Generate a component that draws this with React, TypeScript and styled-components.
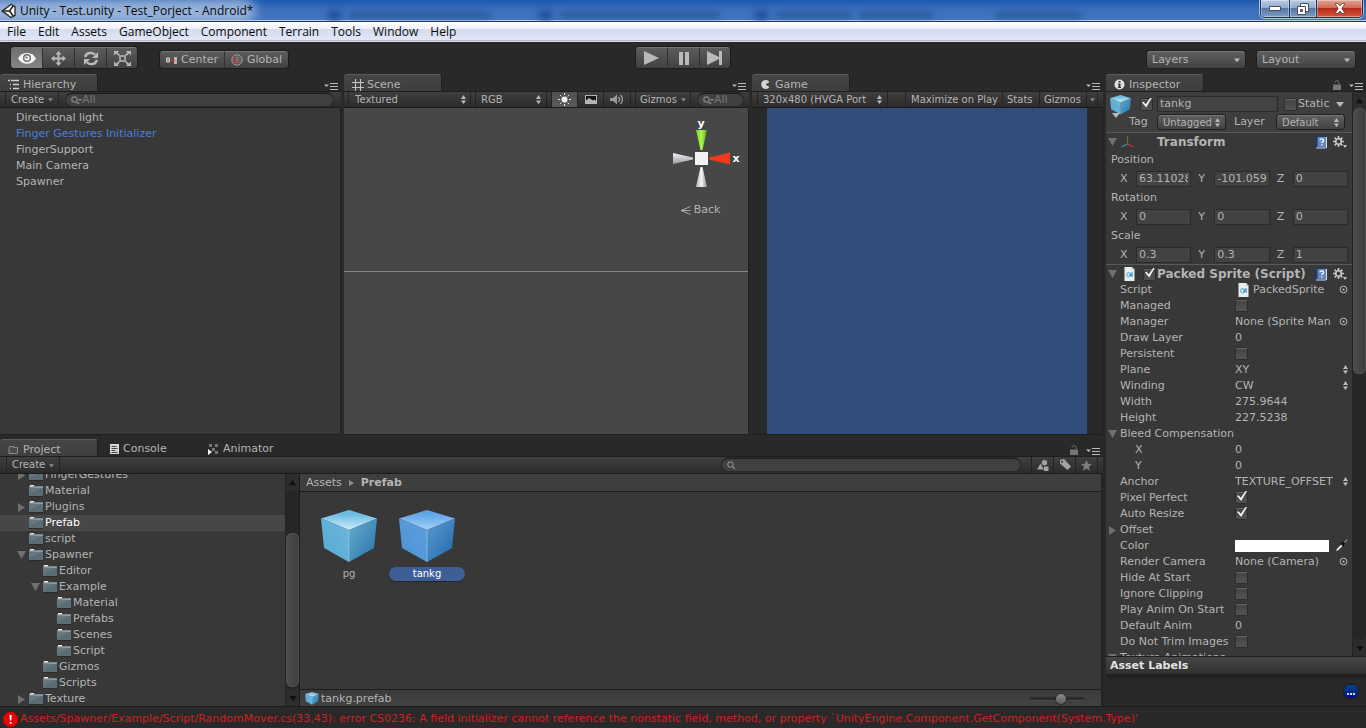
import React, { useId } from 'react';
import styled, { createGlobalStyle, css } from 'styled-components';

const c = {
  frame: '#292929',
  panel: '#383838',
  header: '#3e3e3e',
  line: '#1f1f1f',
  text: '#b4b4b4',
  dim: '#7c7c7c',
  icon: '#b9b9b9',
};

const Global = createGlobalStyle`
  * { box-sizing: border-box; }
  body {
    margin: 0;
    background: ${c.frame};
    color: ${c.text};
    font: 11px/16px "DejaVu Sans", Verdana, sans-serif;
    overflow: hidden;
  }
  button, input, select { font: inherit; color: inherit; background: none; border: 0; padding: 0; margin: 0; border-radius: 0; }
  select { appearance: none; }
  input { outline: none; min-width: 0; }
  svg { display: block; flex: none; }
  ul { list-style: none; margin: 0; padding: 0; }
  h2, h3 { margin: 0; font-size: 11px; }
`;

/* ---------- window frame ---------- */

const Shell = styled.div`
  display: flex;
  flex-direction: column;
  height: 100vh;
`;

const TitleBar = styled.header`
  position: relative;
  flex: none;
  display: flex;
  align-items: center;
  height: 22px;
  padding-left: 1px;
  overflow: hidden;
  background: linear-gradient(#1b58b0, #3b6fbd 45%, #4475bd);
  border-bottom: 1px solid #26365c;
  box-shadow: inset 0 -1px 0 #b5c9e8;
`;

const Glow = styled.div`
  position: absolute;
  left: -30px;
  top: -2px;
  width: 285px;
  height: 26px;
  border-radius: 12px;
  background: #b5c8e2;
  opacity: 0.75;
  filter: blur(6px);
`;

const Ghosts = styled.div`
  position: absolute;
  left: 24%;
  right: 12%;
  top: 10px;
  height: 10px;
  display: flex;
  align-items: center;
  gap: 8px;
  filter: blur(3px);
`;

const Ghost = styled.i<{ $w: number; $strong?: boolean }>`
  flex: ${(p) => p.$w} 1 0;
  height: ${(p) => (p.$strong ? 10 : 6)}px;
  background: ${(p) => (p.$strong ? '#24509a' : '#2a579b')};
`;

const GhostGap = styled.i<{ $w: number }>`
  flex: ${(p) => p.$w} 1 0;
`;

const Title = styled.h1`
  position: relative;
  margin: 0 auto 0 4px;
  font: 12px/20px "Open Sans", "Noto Sans", sans-serif;
  color: #0b0b0b;
`;

const AppLogo = styled.svg`
  position: relative;
`;

const WinButtons = styled.div`
  position: relative;
  align-self: flex-start;
  display: flex;
  height: 18px;
  margin-right: 3px;
  border: 1px solid #22345c;
  border-top: 0;
  border-radius: 0 0 5px 5px;
  overflow: hidden;
  box-shadow: 0 0 0 1px #a9bfe0;
`;

const WinButton = styled.button<{ $w: number; $close?: boolean }>`
  display: grid;
  place-items: center;
  width: ${(p) => p.$w}px;
  box-shadow: inset 0 0 0 1px rgba(255, 255, 255, 0.35);
  background: ${(p) =>
    p.$close
      ? 'linear-gradient(#e3a594, #cf6a55 45%, #b5281a 50%, #d8573a)'
      : 'linear-gradient(#b9cbe4, #93abcf 45%, #56779f 50%, #7c9cc8)'};
  & + & { border-left: 1px solid #22345c; }
`;

const MenuBar = styled.nav`
  flex: none;
  display: flex;
  height: 20px;
  padding-left: 7px;
  gap: 12px;
  background: linear-gradient(#fff, #eef1f9 34%, #d5dcef 36%, #e2e7f7 90%, #b0b6c8 92%, #f0f0f0);
  button {
    color: #0b0b0b;
    font: 12px/20px "Open Sans", "Noto Sans", sans-serif;
  }
`;

/* ---------- main toolbar ---------- */

const Toolbar = styled.div`
  flex: none;
  display: grid;
  grid-template-columns: 1fr auto 1fr;
  align-items: end;
  height: 32px;
  padding: 0 11px 6px;
`;

const Cluster = styled.div<{ $gap: number; $end?: boolean }>`
  display: flex;
  align-items: flex-end;
  gap: ${(p) => p.$gap}px;
  justify-content: ${(p) => (p.$end ? 'flex-end' : 'flex-start')};
`;

const ButtonGroup = styled.div`
  display: flex;
  border-radius: 3px;
  overflow: hidden;
  box-shadow: 0 0 0 1px #1d1d1d;
`;

const GroupButton = styled.button<{ $w: number; $h: number; $on?: boolean }>`
  display: flex;
  align-items: center;
  justify-content: center;
  gap: 4px;
  width: ${(p) => p.$w}px;
  height: ${(p) => p.$h}px;
  background: ${(p) => (p.$on ? 'linear-gradient(#6e6e6e, #858585)' : 'linear-gradient(#5c5c5c, #414141)')};
  border-top: 1px solid #757575;
  & + & { border-left: 1px solid #303030; }
`;

const bevel = css`
  background: linear-gradient(#5e5e5e, #424242);
  border-radius: 3px;
  border-top: 1px solid #787878;
  box-shadow: 0 0 0 1px #1f1f1f;
`;

const PopupBox = styled.span<{ $w: number; $h: number }>`
  ${bevel}
  display: flex;
  align-items: center;
  width: ${(p) => p.$w}px;
  height: ${(p) => p.$h}px;
  padding: 0 5px;
  select { flex: 1; min-width: 0; }
`;

/* ---------- docks ---------- */

const Work = styled.main`
  flex: 1;
  min-height: 0;
  display: grid;
  grid-template-columns: minmax(0, 1fr) 260px;
  gap: 3px;
`;

const LeftArea = styled.div`
  display: grid;
  min-height: 0;
  grid-template-rows: minmax(0, 361fr) minmax(0, 267fr);
  gap: 4px;
`;

const TopDocks = styled.div`
  display: grid;
  min-height: 0;
  grid-template-columns: minmax(0, 341fr) minmax(0, 405fr) minmax(0, 351fr);
  gap: 3px;
`;

const Dock = styled.section`
  display: flex;
  flex-direction: column;
  min-width: 0;
  min-height: 0;
`;

const TabStrip = styled.div`
  flex: none;
  display: flex;
  height: 17px;
  padding-right: 3px;
`;

const Tab = styled.button<{ $on?: boolean }>`
  display: flex;
  align-items: center;
  gap: 3px;
  width: 98px;
  padding: 3px 0 0 ${(p) => (p.$on ? 8 : 12)}px;
  text-align: left;
  ${(p) =>
    p.$on &&
    css`
      background: linear-gradient(#454545, #3e3e3e);
      border-top: 1px solid #5b5b5b;
      border-right: 1px solid #1f1f1f;
      border-radius: 3px 3px 0 0;
    `}
`;

const TabEnd = styled.div`
  display: flex;
  align-items: flex-end;
  gap: 8px;
  margin-left: auto;
  padding-bottom: 1px;
`;

const IconButton = styled.button`
  display: flex;
  align-items: center;
  justify-content: center;
`;

const SubBar = styled.div<{ $tall?: boolean }>`
  flex: none;
  display: flex;
  align-items: stretch;
  height: ${(p) => (p.$tall ? 18 : 17)}px;
  font-size: 10px;
  line-height: 16px;
  background: linear-gradient(#3f3f3f, #2b2b2b);
  border-top: 1px solid #1f1f1f;
  border-bottom: 1px solid #1c1c1c;
`;

const Cell = styled.div<{ $w?: number; $lead?: number; $on?: boolean; $pad?: number }>`
  display: flex;
  align-items: center;
  justify-content: space-between;
  flex: none;
  width: ${(p) => (p.$w ? p.$w + 'px' : 'auto')};
  margin-left: ${(p) => p.$lead ?? 0}px;
  padding: 0 ${(p) => p.$pad ?? 4}px 0 ${(p) => p.$pad ?? 6}px;
  border-left: 1px solid #232323;
  box-shadow: 1px 0 0 #232323;
  background: ${(p) => (p.$on ? 'linear-gradient(#505050, #5a5a5a)' : 'none')};
  white-space: nowrap;
  select { flex: 1; min-width: 0; overflow: hidden; }
  button { flex: 1; display: flex; align-items: center; justify-content: space-between; }
`;

const CenterCell = styled(Cell)`
  button { justify-content: center; }
`;

const BarEnd = styled.span`
  width: 6px;
  border-left: 1px solid #232323;
`;

const Search = styled.label<{ $lead: number; $trail: number; $grow?: boolean; $w?: number }>`
  display: flex;
  align-items: center;
  flex: ${(p) => (p.$grow ? '1 1 0' : `0 1 ${p.$w}px`)};
  min-width: 0;
  height: 13px;
  margin: 1px ${(p) => p.$trail}px 1px ${(p) => p.$lead}px;
  padding: 0 5px;
  border-radius: 7px;
  background: #404040;
  border-top: 1px solid #1f1f1f;
  box-shadow: 0 0 0 1px #2a2a2a;
  font-size: 11px;
  line-height: 12px;
  input { flex: 1; width: 20px; height: 12px; line-height: 12px; }
  input::placeholder { color: #777; opacity: 1; }
`;

const Body = styled.div`
  flex: 1;
  min-height: 0;
  background: ${c.panel};
  border-right: 1px solid #1f1f1f;
  border-bottom: 1px solid #1f1f1f;
  overflow: hidden;
`;

const HierarchyList = styled.ul`
  padding-top: 2px;
  li { padding-left: 16px; height: 16px; }
`;

const HierarchyItem = styled.button<{ $prefab?: boolean }>`
  color: ${(p) => (p.$prefab ? '#4c7ed9' : c.text)};
  line-height: 16px;
`;

const SceneView = styled(Body)`
  position: relative;
  background: linear-gradient(#474747 0 163px, #878787 163px 164px, #474747 164px);
`;

const SceneGizmo = styled.div`
  position: absolute;
  top: 8px;
  right: 6px;
  display: flex;
  flex-direction: column;
  align-items: center;
  width: 80px;
`;

const BackButton = styled.button`
  display: flex;
  align-items: center;
  gap: 3px;
  margin-top: 12px;
  padding-right: 4px;
`;

const GameView = styled(Body)`
  display: flex;
  justify-content: center;
  background: #292929;
`;

const GameScreen = styled.div`
  width: 320px;
  max-width: 100%;
  background: #314d79;
`;

/* ---------- project ---------- */

const ProjectBody = styled.div`
  flex: 1;
  min-height: 0;
  display: grid;
  grid-template-columns: minmax(0, 299fr) minmax(0, 804fr);
`;

const TreePane = styled.div`
  display: flex;
  min-height: 0;
  background: ${c.panel};
`;

const TreeClip = styled.div`
  flex: 1;
  min-width: 0;
  overflow: hidden;
`;

const Tree = styled.ul`
  margin-top: -7px;
`;

const TreeRow = styled.li<{ $depth: number; $on?: boolean }>`
  display: flex;
  align-items: center;
  height: 16px;
  padding-left: ${(p) => 17 + p.$depth * 14}px;
  background: ${(p) => (p.$on ? '#474747' : 'none')};
  color: ${(p) => (p.$on ? '#fff' : c.text)};
`;

const FoldSlot = styled.span`
  flex: none;
  width: 12px;
`;

const TreeButton = styled.button`
  display: flex;
  align-items: center;
  gap: 2px;
  line-height: 16px;
`;

const ScrollBar = styled.div`
  flex: none;
  display: flex;
  flex-direction: column;
  align-items: center;
  width: 14px;
  background: #2d2d2d;
  border-left: 1px solid #232323;
`;

const ScrollArrow = styled.button`
  display: grid;
  place-items: center;
  flex: none;
  width: 12px;
  height: 16px;
`;

const ScrollTrack = styled.div`
  flex: 1;
  display: flex;
  flex-direction: column;
  width: 13px;
  border-radius: 6px;
  background: #262626;
`;

const ScrollPart = styled.div<{ $grow: number; $thumb?: boolean }>`
  flex: ${(p) => p.$grow} 1 0;
  border-radius: 6px;
  ${(p) =>
    p.$thumb &&
    css`
      background: linear-gradient(90deg, #4e4e4e, #3c3c3c);
      box-shadow: inset 0 0 0 1px #505050;
    `}
`;

const AssetPane = styled.div`
  display: flex;
  flex-direction: column;
  min-width: 0;
  border-left: 1px solid #1c1c1c;
  border-right: 2px solid #222;
  background: ${c.panel};
`;

const Crumbs = styled.div`
  flex: none;
  display: flex;
  align-items: center;
  gap: 7px;
  height: 18px;
  padding-left: 6px;
  background: ${c.header};
  border-bottom: 1px solid #1c1c1c;
`;

const Bold = styled.span`
  font-weight: bold;
`;

const AssetGrid = styled.ul`
  flex: 1;
  min-height: 0;
  display: flex;
  align-items: flex-start;
  gap: 2px;
  padding: 18px 0 0 11px;
`;

const Asset = styled.button`
  display: flex;
  flex-direction: column;
  align-items: center;
  gap: 4px;
  width: 76px;
`;

const AssetName = styled.span<{ $on?: boolean }>`
  width: 100%;
  height: 14px;
  border-radius: 7px;
  font-size: 10px;
  line-height: 14px;
  text-align: center;
  ${(p) =>
    p.$on &&
    css`
      background: #3e5f96;
      color: #fff;
      box-shadow: 0 1px 1px #242424;
    `}
`;

const AssetFooter = styled.div`
  flex: none;
  display: flex;
  align-items: center;
  gap: 2px;
  height: 17px;
  padding: 1px 17px 0 5px;
  background: linear-gradient(#3a3a3a, #424242);
  border-top: 1px solid #1c1c1c;
`;

const ZoomSlider = styled.input`
  appearance: none;
  width: 55px;
  height: 10px;
  margin-left: auto;
  &::-webkit-slider-runnable-track {
    height: 4px;
    border-radius: 2px;
    background: #2b2b2b;
    border-bottom: 1px solid #4a4a4a;
  }
  &::-webkit-slider-thumb {
    appearance: none;
    width: 10px;
    height: 10px;
    margin-top: -3px;
    border-radius: 50%;
    background: linear-gradient(#8a8a8a, #5b5b5b);
    box-shadow: 0 0 0 1px #2a2a2a;
  }
`;

/* ---------- inspector ---------- */

const InspectorMain = styled.div`
  flex: 1;
  min-height: 0;
  display: flex;
  border-top: 1px solid #1f1f1f;
`;

const InspectorScroll = styled.div`
  flex: 1;
  min-width: 0;
  overflow: hidden;
  background: ${c.panel};
`;

const ObjectHeader = styled.div`
  display: flex;
  height: 41px;
  padding: 3px 8px 0 4px;
  background: ${c.header};
  border-bottom: 1px solid #5a5a5a;
`;

const ObjectRows = styled.div`
  flex: 1;
  min-width: 0;
`;

const ObjectCube = styled.span`
  position: relative;
  flex: none;
  width: 18px;
  svg + svg {
    position: absolute;
    left: 2px;
    top: 16px;
  }
`;

const ObjectRow = styled.div<{ $pad: number }>`
  display: flex;
  align-items: center;
  height: 18px;
  padding-left: ${(p) => p.$pad}px;
`;

const Push = styled.span`
  margin-left: auto;
`;

const NameField = styled.input`
  flex: 1;
  height: 16px;
  margin: 0 6px 0 4px;
  padding: 0 2px;
  background: #424242;
  border: 1px solid #2b2b2b;
`;

const Check = styled.input`
  appearance: none;
  position: relative;
  flex: none;
  width: 13px;
  height: 13px;
  border-radius: 2px;
  background: linear-gradient(#424242, #545454);
  box-shadow: inset 0 0 0 1px #2c2c2c, inset 0 2px 0 #666;
  &:checked::after {
    content: '';
    position: absolute;
    left: 2px;
    top: 0;
    width: 10px;
    height: 10px;
    background: #f2f2f2;
    clip-path: polygon(0 50%, 15% 42%, 38% 68%, 85% 0, 100% 0, 42% 100%);
  }
`;

const TagLabel = styled.label<{ $w: number }>`
  width: ${(p) => p.$w}px;
  padding-left: 1px;
`;

const SmallPopup = styled(PopupBox)`
  font-size: 10px;
`;

const CompHeader = styled.div`
  display: flex;
  align-items: center;
  height: 17px;
  padding: 1px 5px 0 2px;
`;

const CompSection = styled.section`
  & + & { border-top: 1px solid #5a5a5a; }
`;

const CompIcon = styled.span<{ $w: number }>`
  display: flex;
  align-items: center;
  gap: 4px;
  width: ${(p) => p.$w}px;
`;

const CompTitle = styled.h3`
  flex: 1;
  font-size: 12px;
  line-height: 16px;
  white-space: nowrap;
`;

const CompTools = styled.span`
  display: flex;
  gap: 6px;
`;

const VecLabel = styled.div`
  height: 19px;
  padding-left: 5px;
  line-height: 19px;
`;

const VecRow = styled.div`
  display: flex;
  gap: 7px;
  height: 19px;
  padding: 2px 4px 0 14px;
`;

const VecCell = styled.label`
  flex: 1;
  min-width: 0;
  display: flex;
  align-items: flex-start;
  span { width: 16px; }
  input {
    flex: 1;
    width: 0;
    height: 16px;
    padding: 0 2px;
    background: #424242;
    border: 1px solid #2b2b2b;
  }
`;

const PropLine = styled.div`
  display: grid;
  grid-template-columns: 14px 113px 2px minmax(0, 1fr);
  align-items: center;
  height: 16px;
`;

const PropLabel = styled.label<{ $indent?: boolean; $free?: boolean }>`
  grid-column: 2;
  padding-left: ${(p) => (p.$indent ? 15 : 0)}px;
  overflow: ${(p) => (p.$free ? 'visible' : 'hidden')};
  white-space: nowrap;
`;

const Gutter = styled.span`
  grid-column: 1;
  padding-left: 2px;
`;

const PropValue = styled.div`
  grid-column: 4;
  display: flex;
  align-items: center;
  height: 16px;
  min-width: 0;
  padding: 0 4px 1px 0;
  select, input[type='text'] { flex: 1; min-width: 0; height: 15px; }
`;

const ObjectText = styled.span`
  flex: 1;
  min-width: 0;
  overflow: hidden;
  white-space: nowrap;
  margin-right: 4px;
`;

const ObjectIcon = styled.span`
  padding: 0 4px 0 3px;
`;

const Swatch = styled.button`
  flex: 1;
  height: 12px;
  background: #fff;
  margin-right: 6px;
`;

const LabelsHeader = styled.h2`
  flex: none;
  height: 18px;
  padding-left: 4px;
  line-height: 17px;
  color: #e2e2e2;
  background: linear-gradient(#474747, #303030);
  border-top: 1px solid #1f1f1f;
`;

const LabelsBody = styled.div`
  flex: none;
  display: flex;
  align-items: center;
  justify-content: flex-end;
  height: 32px;
  padding: 2px 8px 0 0;
  background: linear-gradient(#1f1f1f, #292929 8px);
`;

const DotsButton = styled.button`
  display: flex;
  align-items: flex-end;
  justify-content: center;
  gap: 1px;
  width: 14px;
  height: 13px;
  padding-bottom: 3px;
  border-radius: 5px;
  background: linear-gradient(#02468c, #000e7c);
  box-shadow: 0 0 2px #000;
  i { width: 2px; height: 2px; background: #d6def0; }
`;

const StatusBar = styled.footer`
  flex: none;
  display: flex;
  align-items: center;
  gap: 2px;
  height: 22px;
  padding: 3px 0 0 3px;
  border-top: 1px solid #1c1c1c;
  color: #cc2222;
  white-space: nowrap;
  overflow: hidden;
`;

/* ---------- icons ---------- */

const TriDown = ({ s = 6, fill = c.icon }: { s?: number; fill?: string }) => (
  <svg width={s} height={s} viewBox="0 0 8 8"><path d="M0 2h8L4 7z" fill={fill} /></svg>
);
const TriUp = () => (
  <svg width="7" height="7" viewBox="0 0 8 8"><path d="M0 7h8L4 1z" fill="#111" /></svg>
);
const UpDown = () => (
  <svg width="5" height="9" viewBox="0 0 5 9" fill={c.icon}><path d="M0 4h5L2.500 0zM0 5.500h5L2.500 9z" /></svg>
);
const FoldOpen = () => (
  <svg width="9" height="8" viewBox="0 0 9 8"><path d="M0 0h9L4.500 8z" fill="#707070" /></svg>
);
const FoldShut = () => (
  <svg width="8" height="9" viewBox="0 0 8 9"><path d="M1 0v9l7-4.500z" fill="#707070" /></svg>
);
const PaneMenu = () => (
  <svg width="14" height="7" viewBox="0 0 14 7"><path d="M0 1.500h5L2.500 4z" fill={c.icon} /><path d="M5 .5h8M5 3.500h8M5 6.500h8" transform="translate(1)" stroke={c.icon} /></svg>
);
const Lock = () => (
  <svg width="8" height="10" viewBox="0 0 8 10"><path d="M0 4.500h8V10H0z" fill="#777" /><path d="M2 2.500C2 .2 6 .2 6 2.500v2" fill="none" stroke="#777" /></svg>
);
const Magnifier = ({ arrow }: { arrow?: boolean }) => (
  <svg width={arrow ? 11 : 9} height="9" viewBox={arrow ? '0 0 11 9' : '0 0 9 9'}>
    <circle cx="3.500" cy="3.500" r="2.700" fill="none" stroke="#868686" strokeWidth="1.200" />
    <path d="M5.500 5.500L8 8" stroke="#868686" strokeWidth="1.500" />
    {arrow && <path d="M7 3h4L9 5.500z" fill="#868686" />}
  </svg>
);
const Logo = () => (
  <AppLogo width="15" height="16" viewBox="0 0 15 16">
    <path d="M1 8L10 1.500 14 3.500V12.500L10 14.500z" fill="#fff" stroke="#222" strokeWidth="1.300" strokeLinejoin="round" />
    <path d="M2 8h6.500M8.500 8L12.500 2.500M8.500 8l4 5.500" stroke="#222" strokeWidth="1.600" />
    <path d="M4 6.500l4-3M4 9.500l4 3" stroke="#555" strokeWidth="1" />
  </AppLogo>
);
const Eye = () => (
  <svg width="18" height="13" viewBox="0 0 18 13"><path d="M0 6.500C4-.8 14-.8 18 6.500 14 13.500 4 13.500 0 6.500z" fill="#f4f4f4" /><circle cx="9" cy="6" r="4" fill="#6b6b6b" /><circle cx="9" cy="6" r="2.600" fill="#f4f4f4" /><circle cx="8.500" cy="5.500" r="1.100" fill="#666" /></svg>
);
const Move = () => (
  <svg width="15" height="15" viewBox="0 0 15 15"><path d="M7.500 2v11M2 7.500h11" stroke={c.icon} strokeWidth="2" /><path d="M7.500 0L10.500 3.500h-6zM7.500 15l3-3.500h-6zM0 7.500l3.500-3v6zM15 7.500l-3.500-3v6z" fill={c.icon} /></svg>
);
const Rotate = () => (
  <svg width="16" height="15" viewBox="0 0 16 15"><path d="M2 6C3.500 1.500 9 .5 12 3.800M14 9C12.500 13.500 7 14.500 4 11.200" fill="none" stroke={c.icon} strokeWidth="2.400" /><path d="M15 1v6H9zM1 14V8h6z" fill={c.icon} /></svg>
);
const Scale = () => (
  <svg width="17" height="15" viewBox="0 0 17 15" fill={c.icon}><path d="M0 0h5L3.600 1.400 6 4 5 5 2 2.600 0 4.500zM17 0v4.500l-2-1.900L12 5l-1-1 2.400-2.600L12 0zM0 15v-4.500l2 1.900L5 10l1 1-2.400 2.600L5 15zM17 15h-5l1.400-1.400L11 11l1-1 3 2.400 2-1.900z" /><path d="M6 5h5v5H6z" fill="none" stroke={c.icon} strokeWidth="1.500" /></svg>
);
const Pivot = () => (
  <svg width="11" height="7" viewBox="0 0 11 7"><path d="M.5 1h3v4h-3z" fill="#999" stroke="#c8c8c8" /><path d="M5 3.500h3" stroke="#c23" strokeWidth="1.400" /><path d="M8 0h3v7H8z" fill="#b4b4b4" /><path d="M6 1.500l3 2-3 2z" fill="#b33" /></svg>
);
const Globe = () => (
  <svg width="12" height="12" viewBox="0 0 12 12"><circle cx="6" cy="6" r="5.200" fill="#555" stroke="#9c9c9c" /><path d="M6 1v10M1 6h10M2.500 3c2 1.500 5 1.500 7 0M2.500 9c2-1.500 5-1.500 7 0" stroke="#8b8b8b" strokeWidth=".7" fill="none" /><path d="M3.500 2.500v6H8" fill="none" stroke="#c2303a" strokeWidth="1.500" /></svg>
);
const PlayIcon = () => <svg width="15" height="14" viewBox="0 0 15 14"><path d="M0 0l15 7-15 7z" fill={c.icon} /></svg>;
const PauseIcon = () => <svg width="10" height="13" viewBox="0 0 10 13"><path d="M0 0h4v13H0zM6 0h4v13H6z" fill={c.icon} /></svg>;
const StepIcon = () => <svg width="16" height="14" viewBox="0 0 16 14"><path d="M0 0l12 6V0h3v14h-3V8L0 14z" fill={c.icon} /></svg>;
const ListIcon = () => <svg width="12" height="11" viewBox="0 0 12 11"><path d="M0 1.500h2M3 1.500h8M2 5.500h1M5 5.500h6M2 9.500h1M5 9.500h6" stroke="#d0d0d0" strokeWidth="1.300" /></svg>;
const HashIcon = () => <svg width="12" height="12" viewBox="0 0 12 12"><path d="M3.500 0v12M8.500 0v12M0 3.500h12M0 8.500h12" stroke="#c4c4c4" strokeWidth="1.100" /></svg>;
const GameIcon = () => <svg width="12" height="11" viewBox="0 0 12 11"><path d="M5.500 1A4.500 4.500 0 1 0 9.500 8L5.500 5.500 9.500 3A4.500 4.500 0 0 0 5.500 1z" fill="#d6d6d6" /></svg>;
const InfoIcon = () => <svg width="12" height="12" viewBox="0 0 12 12"><circle cx="5.500" cy="5.500" r="5" fill="#e0e0e0" /><path d="M4.500 2h2v1.500h-2zM4 4.500h2.500v3.500H7V9H4V8h.5V5.500H4z" fill="#333" /></svg>;
const ProjectIcon = () => <svg width="12" height="10" viewBox="0 0 12 10"><path d="M1 8.500v-6h.5v-1h4v1H9.500v6z" fill="#4a4a4a" stroke="#8d8d8d" /></svg>;
const ConsoleIcon = () => <svg width="10" height="10" viewBox="0 0 10 10"><path d="M0 0h9v10H0z" fill="#d8d8d8" /><path d="M1.500 2.500h5M1.500 4.500h6M1.500 6.500h4M1.500 8.500h6" stroke="#444" /></svg>;
const AnimatorIcon = () => <svg width="12" height="11" viewBox="0 0 12 11"><path d="M1 0h3v3H1zM7 0h3v3H7zM4 4h3v3H4zM7 7h3v3H7z" fill="#747474" /><path d="M0 5l4 3-4 3z" fill="#fff" /></svg>;
const Sun = () => (
  <svg width="13" height="13" viewBox="0 0 13 13"><circle cx="6.500" cy="6.500" r="3" fill="#f0f0f0" /><path d="M6.500 0v2M6.500 11v2M0 6.500h2M11 6.500h2M2 2l1.300 1.300M9.700 9.700L11 11M11 2L9.700 3.300M2 11l1.300-1.300" stroke="#e4e4e4" /></svg>
);
const Picture = () => <svg width="12" height="9" viewBox="0 0 12 9"><path d="M0 0h12v9H0z" fill="#b4b4b4" /><path d="M1 1h10v5L9.500 4.500 8 5.500 4 3 1 5.500z" fill="#161616" /></svg>;
const Speaker = () => <svg width="14" height="11" viewBox="0 0 14 11"><path d="M0 4h3l4-3.500v10L3 7H0z" fill="#999" /><path d="M8.500 3c1.300 1.500 1.300 3.500 0 5M10.500 1c2.500 2.500 2.500 6.500 0 9" fill="none" stroke="#a8a8a8" strokeWidth="1.200" /></svg>;
const Shapes = () => <svg width="12" height="11" viewBox="0 0 12 11" fill="#a2a2a2"><circle cx="7.500" cy="2.700" r="2.700" /><path d="M3.500 3.500L7 9.500H0zM7 6.500h4.500V11H7z" /></svg>;
const TagIcon = () => <svg width="12" height="12" viewBox="0 0 12 12"><path d="M1 1l4-1 7 7.500L8.500 11 1 4.500z" fill="#a2a2a2" /><circle cx="3" cy="2.800" r="1" fill="#333" /></svg>;
const Star = () => <svg width="11" height="11" viewBox="0 0 11 11"><path d="M5.500 0l1.600 3.800 3.900.3-3 2.600 1 4-3.500-2.200L2 10.700l1-4L0 4.100l3.900-.3z" fill="#7c7c7c" /></svg>;
const Folder = () => (
  <svg width="14" height="12" viewBox="0 0 14 12"><path d="M0 2L1 0h4l1 1.500h8V11H0z" fill="#7b8a92" /><path d="M0 3h14v8H0z" fill="#5b6c75" /><path d="M0 9V3h14z" fill="#66777f" /><path d="M1 .8h4" stroke="#e4e9eb" strokeWidth="1.500" /><path d="M6 2h8" stroke="#a3aeb4" /><path d="M0 11.500h14" stroke="#2b2b2b" /></svg>
);
const Cube = ({ w, blue }: { w: number; blue?: boolean }) => {
  const id = useId();
  const [t1, t2, l1, l2, r1, r2] = blue
    ? ['#5fa6e6', '#a5d0fa', '#4a93d4', '#5e9fdc', '#5596cc', '#276cb1']
    : ['#6dbbe3', '#cdeefc', '#55a9d3', '#6db7dd', '#63a7c9', '#2a79b0'];
  return (
    <svg width={w} height={Math.round((w * 53) / 56)} viewBox="0 0 56 53">
      <defs>
        <linearGradient id={id + 't'} x1="0" y1="0" x2="0" y2="1"><stop offset=".2" stopColor={t1} /><stop offset="1" stopColor={t2} /></linearGradient>
        <linearGradient id={id + 'l'} x1="0" y1="1" x2="1" y2="0"><stop offset="0" stopColor={l1} /><stop offset="1" stopColor={l2} /></linearGradient>
        <linearGradient id={id + 'r'} x1="0" y1="0" x2="1" y2="1"><stop offset=".1" stopColor={r1} /><stop offset=".9" stopColor={r2} /></linearGradient>
      </defs>
      <path d="M0 8.500L28 0l28 8.500L28 20z" fill={`url(#${id}t)`} />
      <path d="M0 8.500L28 20v32L3 38z" fill={`url(#${id}l)`} />
      <path d="M56 8.500L28 20v32l25-14z" fill={`url(#${id}r)`} />
      <path d="M28 20v32" stroke="#9fd0ee" strokeWidth=".8" opacity=".7" />
    </svg>
  );
};
const Axes = () => (
  <svg width="14" height="12" viewBox="0 0 14 12"><path d="M6.500 8V0" stroke="#4f7a24" strokeWidth="1.300" /><path d="M6.500 8L12.500 11" stroke="#c33" strokeWidth="1.300" /><path d="M6.500 8L.5 11" stroke="#3a8fb5" strokeWidth="1.300" /></svg>
);
const ScriptIcon = () => (
  <svg width="11" height="14" viewBox="0 0 11 14"><path d="M.5 0H8l2.500 2.500V14H.5z" fill="#e8edf0" /><path d="M8 0v2.500h2.500z" fill="#a9b4ba" /><path d="M5 5.500c-3-.6-3 5-.2 4.400M6 5.500v4.500M8 5v4.500M5 7h4M5 8.700h4" fill="none" stroke="#3f97c9" strokeWidth="1" /></svg>
);
const HelpBook = () => (
  <svg width="12" height="13" viewBox="0 0 12 13"><path d="M0 1l2-1h10v12l-1 1H1L0 12z" fill="#1f3a66" /><path d="M2.500 1h8.500v10H2.500z" fill="#6487b8" /><path d="M5 4.300c0-2 3.600-2 3.600.1 0 1.400-1.800 1.200-1.800 2.600M6.800 8.200v1.300" fill="none" stroke="#fff" strokeWidth="1.300" /><path d="M1 12h10M11.500 1v11" stroke="#d3dce8" /></svg>
);
const Gear = () => (
  <svg width="14" height="13" viewBox="0 0 14 13"><circle cx="5.500" cy="5.500" r="2.800" fill="none" stroke="#c4c4c4" strokeWidth="1.800" /><path d="M5.500 0v2M5.500 9v2M0 5.500h2M9 5.500h2M1.600 1.600L3 3M8 8l1.400 1.400M9.400 1.600L8 3M1.600 9.400L3 8" stroke="#c4c4c4" strokeWidth="1.700" /><path d="M10 9h4l-2 3z" fill="#c4c4c4" /></svg>
);
const Picker = () => <svg width="9" height="9" viewBox="0 0 9 9"><circle cx="4.500" cy="4.500" r="3.400" fill="none" stroke="#bbb" /><circle cx="4.500" cy="4.500" r="1.100" fill="#bbb" /></svg>;
const Dropper = () => <svg width="13" height="13" viewBox="0 0 13 13"><path d="M.5 12.500l1-2.500 5.500-5.500 1.700 1.700L3 11.700z" fill="#eee" stroke="#222" strokeWidth=".6" /><path d="M6 4l3 3M8 5l3.500-3.700" stroke="#111" strokeWidth="2" /><path d="M9.500 3.500L12 .8" stroke="#999" strokeWidth="1.400" /></svg>;
const ErrorIcon = () => <svg width="15" height="15" viewBox="0 0 15 15"><path d="M4.500 0h6L15 4.500v6L10.500 15h-6L0 10.500v-6z" fill="#e00808" stroke="#7d0000" strokeWidth=".6" /><path d="M6.500 3h2.200l-.4 5.500H6.900zM6.700 10h1.800v1.800H6.700z" fill="#fff" /></svg>;
const BackIcon = () => <svg width="11" height="9" viewBox="0 0 11 9"><path d="M10.500 .5L1 4.500l9.500 4M1 4.500h9.500" fill="none" stroke="#b4b4b4" strokeWidth=".9" /></svg>;

const AxisGizmo = () => (
  <svg width="80" height="74" viewBox="0 0 80 74">
    <defs>
      <linearGradient id="gz-v"><stop offset="0" stopColor="#b4b4bb" /><stop offset=".5" stopColor="#f4f4f6" /><stop offset="1" stopColor="#8f8f98" /></linearGradient>
      <linearGradient id="gz-h" x2="0" y2="1"><stop offset="0" stopColor="#f2f2f4" /><stop offset="1" stopColor="#9a9aa3" /></linearGradient>
      <linearGradient id="gz-g"><stop offset="0" stopColor="#7fd32c" /><stop offset=".5" stopColor="#a9f74b" /><stop offset="1" stopColor="#5ea31d" /></linearGradient>
    </defs>
    <text x="39" y="11" textAnchor="middle" fontSize="11" fontWeight="bold" fill="#fff">y</text>
    <path d="M34 14h11l-4.500 20h-2z" fill="url(#gz-g)" />
    <path d="M34 71h11l-4.500-20h-2z" fill="url(#gz-v)" />
    <path d="M11 37v11l20-4.500v-2z" fill="url(#gz-h)" />
    <path d="M68 36.500v12L47 43.500v-2z" fill="#ee3a1d" />
    <path d="M33 36h13v13H33z" fill="#f2f2f2" />
    <text x="74" y="46" textAnchor="middle" fontSize="11" fontWeight="bold" fill="#fff">x</text>
  </svg>
);

/* ---------- composed parts ---------- */

const Popup = ({ w, h, value, label, small }: { w: number; h: number; value: string; label: string; small?: boolean }) => {
  const Box = small ? SmallPopup : PopupBox;
  return (
    <Box $w={w} $h={h}>
      <select aria-label={label} defaultValue={value}><option>{value}</option></select>
      {small ? <UpDown /> : <TriDown />}
    </Box>
  );
};

const Scroll = ({ parts }: { parts: [number, number, number] }) => (
  <ScrollBar>
    <ScrollArrow aria-label="Scroll up"><TriUp /></ScrollArrow>
    <ScrollTrack>
      <ScrollPart $grow={parts[0]} />
      <ScrollPart $grow={parts[1]} $thumb />
      <ScrollPart $grow={parts[2]} />
    </ScrollTrack>
    <ScrollArrow aria-label="Scroll down"><TriDown s={8} fill="#111" /></ScrollArrow>
  </ScrollBar>
);

type Kind = 'text' | 'check' | 'select' | 'object' | 'color' | 'fold' | 'foldShut';
type Prop = { label: string; kind: Kind; value?: string; on?: boolean; indent?: boolean; script?: boolean };

const PropRow = ({ label, kind, value, on, indent, script }: Prop) => {
  const id = useId();
  const fold = kind === 'fold' || kind === 'foldShut';
  return (
    <PropLine>
      {fold && <Gutter>{kind === 'fold' ? <FoldOpen /> : <FoldShut />}</Gutter>}
      <PropLabel htmlFor={fold ? undefined : id} $indent={indent} $free={fold}>{label}</PropLabel>
      {!fold && (
        <PropValue>
          {kind === 'text' && <input type="text" id={id} defaultValue={value} />}
          {kind === 'check' && <Check type="checkbox" id={id} defaultChecked={on} />}
          {kind === 'select' && (
            <>
              <select id={id} defaultValue={value}><option>{value}</option></select>
              <UpDown />
            </>
          )}
          {kind === 'object' && (
            <>
              {script && <ObjectIcon><ScriptIcon /></ObjectIcon>}
              <ObjectText>{value}</ObjectText>
              <IconButton id={id}><Picker /></IconButton>
            </>
          )}
          {kind === 'color' && (
            <>
              <Swatch id={id} />
              <IconButton aria-label="Pick colour"><Dropper /></IconButton>
            </>
          )}
        </PropValue>
      )}
    </PropLine>
  );
};

const Vector = ({ name, values }: { name: string; values: string[] }) => (
  <>
    <VecLabel>{name}</VecLabel>
    <VecRow>
      {['X', 'Y', 'Z'].map((axis, i) => (
        <VecCell key={axis}><span>{axis}</span><input type="text" defaultValue={values[i]} /></VecCell>
      ))}
    </VecRow>
  </>
);

/* ---------- data ---------- */

const menus = ['File', 'Edit', 'Assets', 'GameObject', 'Component', 'Terrain', 'Tools', 'Window', 'Help'];
const hierarchy = ['Directional light', 'Finger Gestures Initializer', 'FingerSupport', 'Main Camera', 'Spawner'];
const tree: { name: string; depth: number; fold?: 'open' | 'shut' }[] = [
  { name: 'FingerGestures', depth: 0, fold: 'shut' },
  { name: 'Material', depth: 0 },
  { name: 'Plugins', depth: 0, fold: 'shut' },
  { name: 'Prefab', depth: 0 },
  { name: 'script', depth: 0 },
  { name: 'Spawner', depth: 0, fold: 'open' },
  { name: 'Editor', depth: 1 },
  { name: 'Example', depth: 1, fold: 'open' },
  { name: 'Material', depth: 2 },
  { name: 'Prefabs', depth: 2 },
  { name: 'Scenes', depth: 2 },
  { name: 'Script', depth: 2 },
  { name: 'Gizmos', depth: 1 },
  { name: 'Scripts', depth: 1 },
  { name: 'Texture', depth: 0, fold: 'shut' },
];
const spriteProps: Prop[] = [
  { label: 'Script', kind: 'object', value: 'PackedSprite', script: true },
  { label: 'Managed', kind: 'check' },
  { label: 'Manager', kind: 'object', value: 'None (Sprite Man' },
  { label: 'Draw Layer', kind: 'text', value: '0' },
  { label: 'Persistent', kind: 'check' },
  { label: 'Plane', kind: 'select', value: 'XY' },
  { label: 'Winding', kind: 'select', value: 'CW' },
  { label: 'Width', kind: 'text', value: '275.9644' },
  { label: 'Height', kind: 'text', value: '227.5238' },
  { label: 'Bleed Compensation', kind: 'fold' },
  { label: 'X', kind: 'text', value: '0', indent: true },
  { label: 'Y', kind: 'text', value: '0', indent: true },
  { label: 'Anchor', kind: 'select', value: 'TEXTURE_OFFSET' },
  { label: 'Pixel Perfect', kind: 'check', on: true },
  { label: 'Auto Resize', kind: 'check', on: true },
  { label: 'Offset', kind: 'foldShut' },
  { label: 'Color', kind: 'color' },
  { label: 'Render Camera', kind: 'object', value: 'None (Camera)' },
  { label: 'Hide At Start', kind: 'check' },
  { label: 'Ignore Clipping', kind: 'check' },
  { label: 'Play Anim On Start', kind: 'check' },
  { label: 'Default Anim', kind: 'text', value: '0' },
  { label: 'Do Not Trim Images', kind: 'check' },
  { label: 'Texture Animations', kind: 'fold' },
];

export default function App() {
  return (
    <Shell>
      <Global />
      <TitleBar>
        <Glow />
        <Ghosts>
          <Ghost $w={14} $strong /><Ghost $w={150} /><GhostGap $w={34} />
          <Ghost $w={14} $strong /><Ghost $w={170} /><GhostGap $w={20} />
          <Ghost $w={14} $strong /><Ghost $w={80} /><Ghost $w={78} /><GhostGap $w={50} />
          <Ghost $w={90} /><GhostGap $w={120} />
        </Ghosts>
        <Logo />
        <Title>Unity - Test.unity - Test_Porject - Android*</Title>
        <WinButtons>
          <WinButton $w={28} aria-label="Minimize"><svg width="12" height="5" viewBox="0 0 12 5"><path d="M.5.5h11v4H.5z" fill="#fff" stroke="#4a4f5c" /></svg></WinButton>
          <WinButton $w={27} aria-label="Restore"><svg width="12" height="12" viewBox="0 0 12 12"><path d="M3.500.5h8v8h-8z" fill="#fff" stroke="#4a4f5c" /><path d="M.5 3.500h8v8h-8z" fill="#fff" stroke="#4a4f5c" /><path d="M3.500 6.500h2v2h-2z" fill="#7590b8" stroke="#4a4f5c" /></svg></WinButton>
          <WinButton $w={46} $close aria-label="Close"><svg width="12" height="11" viewBox="0 0 12 11"><path d="M1 .5h3l2 2.500L8 .5h3L7.800 5.500l3.200 5H8L6 8l-2 2.500H1l3.200-5z" fill="#fff" stroke="#5a3a44" strokeWidth=".8" /></svg></WinButton>
        </WinButtons>
      </TitleBar>
      <MenuBar>{menus.map((m) => <button key={m}>{m}</button>)}</MenuBar>

      <Toolbar>
        <Cluster $gap={23}>
          <ButtonGroup>
            <GroupButton $w={31} $h={21} $on aria-label="Hand"><Eye /></GroupButton>
            <GroupButton $w={32} $h={21} aria-label="Move"><Move /></GroupButton>
            <GroupButton $w={32} $h={21} aria-label="Rotate"><Rotate /></GroupButton>
            <GroupButton $w={31} $h={21} aria-label="Scale"><Scale /></GroupButton>
          </ButtonGroup>
          <ButtonGroup>
            <GroupButton $w={64} $h={17}><Pivot />Center</GroupButton>
            <GroupButton $w={64} $h={17}><Globe />Global</GroupButton>
          </ButtonGroup>
        </Cluster>
        <ButtonGroup>
          <GroupButton $w={31} $h={21} aria-label="Play"><PlayIcon /></GroupButton>
          <GroupButton $w={32} $h={21} aria-label="Pause"><PauseIcon /></GroupButton>
          <GroupButton $w={31} $h={21} aria-label="Step"><StepIcon /></GroupButton>
        </ButtonGroup>
        <Cluster $gap={12} $end>
          <Popup w={98} h={17} value="Layers" label="Layers" />
          <Popup w={98} h={17} value="Layout" label="Layout" />
        </Cluster>
      </Toolbar>

      <Work>
        <LeftArea>
          <TopDocks>
            <Dock>
              <TabStrip>
                <Tab $on><ListIcon />Hierarchy</Tab>
                <TabEnd><IconButton aria-label="Pane menu"><PaneMenu /></IconButton></TabEnd>
              </TabStrip>
              <SubBar>
                <Cell $w={53} $lead={5} $pad={5}><button>Create<TriDown s={5} fill="#888" /></button></Cell>
                <Search $lead={8} $trail={8} $grow><Magnifier arrow /><input aria-label="Search hierarchy" placeholder="All" /></Search>
              </SubBar>
              <Body>
                <HierarchyList>
                  {hierarchy.map((h, i) => <li key={h}><HierarchyItem $prefab={i === 1}>{h}</HierarchyItem></li>)}
                </HierarchyList>
              </Body>
            </Dock>

            <Dock>
              <TabStrip>
                <Tab $on><HashIcon />Scene</Tab>
                <TabEnd><IconButton aria-label="Pane menu"><PaneMenu /></IconButton></TabEnd>
              </TabStrip>
              <SubBar>
                <Cell $w={122} $lead={4}><select aria-label="Draw mode"><option>Textured</option></select><UpDown /></Cell>
                <Cell $w={71} $lead={5} $pad={5}><select aria-label="Render mode"><option>RGB</option></select><UpDown /></Cell>
                <CenterCell $w={26} $lead={5} $on $pad={0}><button aria-label="Lighting"><Sun /></button></CenterCell>
                <CenterCell $w={26} $pad={0}><button aria-label="Skybox"><Picture /></button></CenterCell>
                <CenterCell $w={27} $pad={0}><button aria-label="Audio"><Speaker /></button></CenterCell>
                <Cell $w={55} $lead={5} $pad={4}><button>Gizmos<TriDown s={5} fill="#888" /></button></Cell>
                <Search $lead={8} $trail={6} $grow><Magnifier arrow /><input aria-label="Search scene" placeholder="All" /></Search>
              </SubBar>
              <SceneView>
                <SceneGizmo>
                  <AxisGizmo />
                  <BackButton><BackIcon />Back</BackButton>
                </SceneGizmo>
              </SceneView>
            </Dock>

            <Dock>
              <TabStrip>
                <Tab $on><GameIcon />Game</Tab>
                <TabEnd><IconButton aria-label="Pane menu"><PaneMenu /></IconButton></TabEnd>
              </TabStrip>
              <SubBar>
                <Cell $w={130} $lead={5} $pad={5}><select aria-label="Resolution"><option>320x480 (HVGA Port</option></select><UpDown /></Cell>
                <Push />
                <Cell $w={97} $pad={5}><button>Maximize on Play</button></Cell>
                <Cell $w={37} $pad={4}><button>Stats</button></Cell>
                <Cell $w={47} $pad={4}><button>Gizmos</button></Cell>
                <CenterCell $w={11} $pad={0}><button aria-label="Gizmo options"><TriDown s={5} fill="#888" /></button></CenterCell>
                <BarEnd />
              </SubBar>
              <GameView><GameScreen /></GameView>
            </Dock>
          </TopDocks>

          <Dock>
            <TabStrip>
              <Tab $on><ProjectIcon />Project</Tab>
              <Tab><ConsoleIcon />Console</Tab>
              <Tab><AnimatorIcon />Animator</Tab>
              <TabEnd>
                <IconButton aria-label="Lock"><Lock /></IconButton>
                <IconButton aria-label="Pane menu"><PaneMenu /></IconButton>
              </TabEnd>
            </TabStrip>
            <SubBar $tall>
              <Cell $w={53} $lead={6} $pad={5}><button>Create<TriDown s={5} fill="#888" /></button></Cell>
              <Push />
              <Search $lead={0} $trail={11} $w={298}><Magnifier /><input aria-label="Search project" /></Search>
              <CenterCell $w={22} $pad={0}><button aria-label="Filter by type"><Shapes /></button></CenterCell>
              <CenterCell $w={22} $pad={0}><button aria-label="Filter by label"><TagIcon /></button></CenterCell>
              <CenterCell $w={22} $pad={0}><button aria-label="Save search"><Star /></button></CenterCell>
              <BarEnd />
            </SubBar>
            <ProjectBody>
              <TreePane>
                <TreeClip>
                  <Tree>
                    {tree.map((t, i) => (
                      <TreeRow key={i} $depth={t.depth} $on={t.name === 'Prefab'}>
                        <FoldSlot>{t.fold === 'open' ? <FoldOpen /> : t.fold === 'shut' ? <FoldShut /> : null}</FoldSlot>
                        <TreeButton><Folder />{t.name}</TreeButton>
                      </TreeRow>
                    ))}
                  </Tree>
                </TreeClip>
                <Scroll parts={[43, 153, 3]} />
              </TreePane>
              <AssetPane>
                <Crumbs><span>Assets</span><svg width="5" height="6" viewBox="0 0 5 6"><path d="M0 0l5 3-5 3z" fill="#909090" /></svg><Bold>Prefab</Bold></Crumbs>
                <AssetGrid>
                  <li><Asset><Cube w={56} /><AssetName>pg</AssetName></Asset></li>
                  <li><Asset><Cube w={56} blue /><AssetName $on>tankg</AssetName></Asset></li>
                </AssetGrid>
                <AssetFooter>
                  <Cube w={14} />tankg.prefab
                  <ZoomSlider type="range" aria-label="Icon size" min={0} max={100} defaultValue={60} />
                </AssetFooter>
              </AssetPane>
            </ProjectBody>
          </Dock>
        </LeftArea>

        <Dock>
          <TabStrip>
            <Tab $on><InfoIcon />Inspector</Tab>
            <TabEnd>
              <IconButton aria-label="Lock"><Lock /></IconButton>
              <IconButton aria-label="Pane menu"><PaneMenu /></IconButton>
            </TabEnd>
          </TabStrip>
          <InspectorMain>
            <InspectorScroll>
              <ObjectHeader>
                <ObjectCube><Cube w={21} /><TriDown s={8} /></ObjectCube>
                <ObjectRows>
                  <ObjectRow $pad={12}>
                    <Check type="checkbox" aria-label="Active" defaultChecked />
                    <NameField aria-label="Name" defaultValue="tankg" />
                    <Check type="checkbox" id="static" />
                    <TagLabel htmlFor="static" $w={39}>Static</TagLabel>
                    <TriDown s={8} />
                  </ObjectRow>
                  <ObjectRow $pad={0}>
                    <TagLabel as="span" $w={30}>Tag</TagLabel>
                    <Popup small w={67} h={14} value="Untagged" label="Tag" />
                    <Push />
                    <TagLabel as="span" $w={44}>Layer</TagLabel>
                    <Popup small w={67} h={14} value="Default" label="Layer" />
                  </ObjectRow>
                </ObjectRows>
              </ObjectHeader>
              <CompSection>
                <CompHeader>
                  <CompIcon $w={49}><FoldOpen /><Axes /></CompIcon>
                  <CompTitle>Transform</CompTitle>
                  <CompTools><IconButton aria-label="Help"><HelpBook /></IconButton><IconButton aria-label="Settings"><Gear /></IconButton></CompTools>
                </CompHeader>
                <Vector name="Position" values={['63.11028', '-101.0592', '0']} />
                <Vector name="Rotation" values={['0', '0', '0']} />
                <Vector name="Scale" values={['0.3', '0.3', '1']} />
              </CompSection>
              <CompSection>
                <CompHeader>
                  <CompIcon $w={49}><FoldOpen /><ObjectIcon><ScriptIcon /></ObjectIcon><Check type="checkbox" aria-label="Enabled" defaultChecked /></CompIcon>
                  <CompTitle>Packed Sprite (Script)</CompTitle>
                  <CompTools><IconButton aria-label="Help"><HelpBook /></IconButton><IconButton aria-label="Settings"><Gear /></IconButton></CompTools>
                </CompHeader>
                {spriteProps.map((p, i) => <PropRow key={i} {...p} />)}
              </CompSection>
            </InspectorScroll>
            <Scroll parts={[0, 266, 267]} />
          </InspectorMain>
          <LabelsHeader>Asset Labels</LabelsHeader>
          <LabelsBody><DotsButton aria-label="Labels"><i /><i /><i /></DotsButton></LabelsBody>
        </Dock>
      </Work>

      <StatusBar>
        <ErrorIcon />
        Assets/Spawner/Example/Script/RandomMover.cs(33,43): error CS0236: A field initializer cannot reference the nonstatic field, method, or property `UnityEngine.Component.GetComponent(System.Type)'
      </StatusBar>
    </Shell>
  );
}
